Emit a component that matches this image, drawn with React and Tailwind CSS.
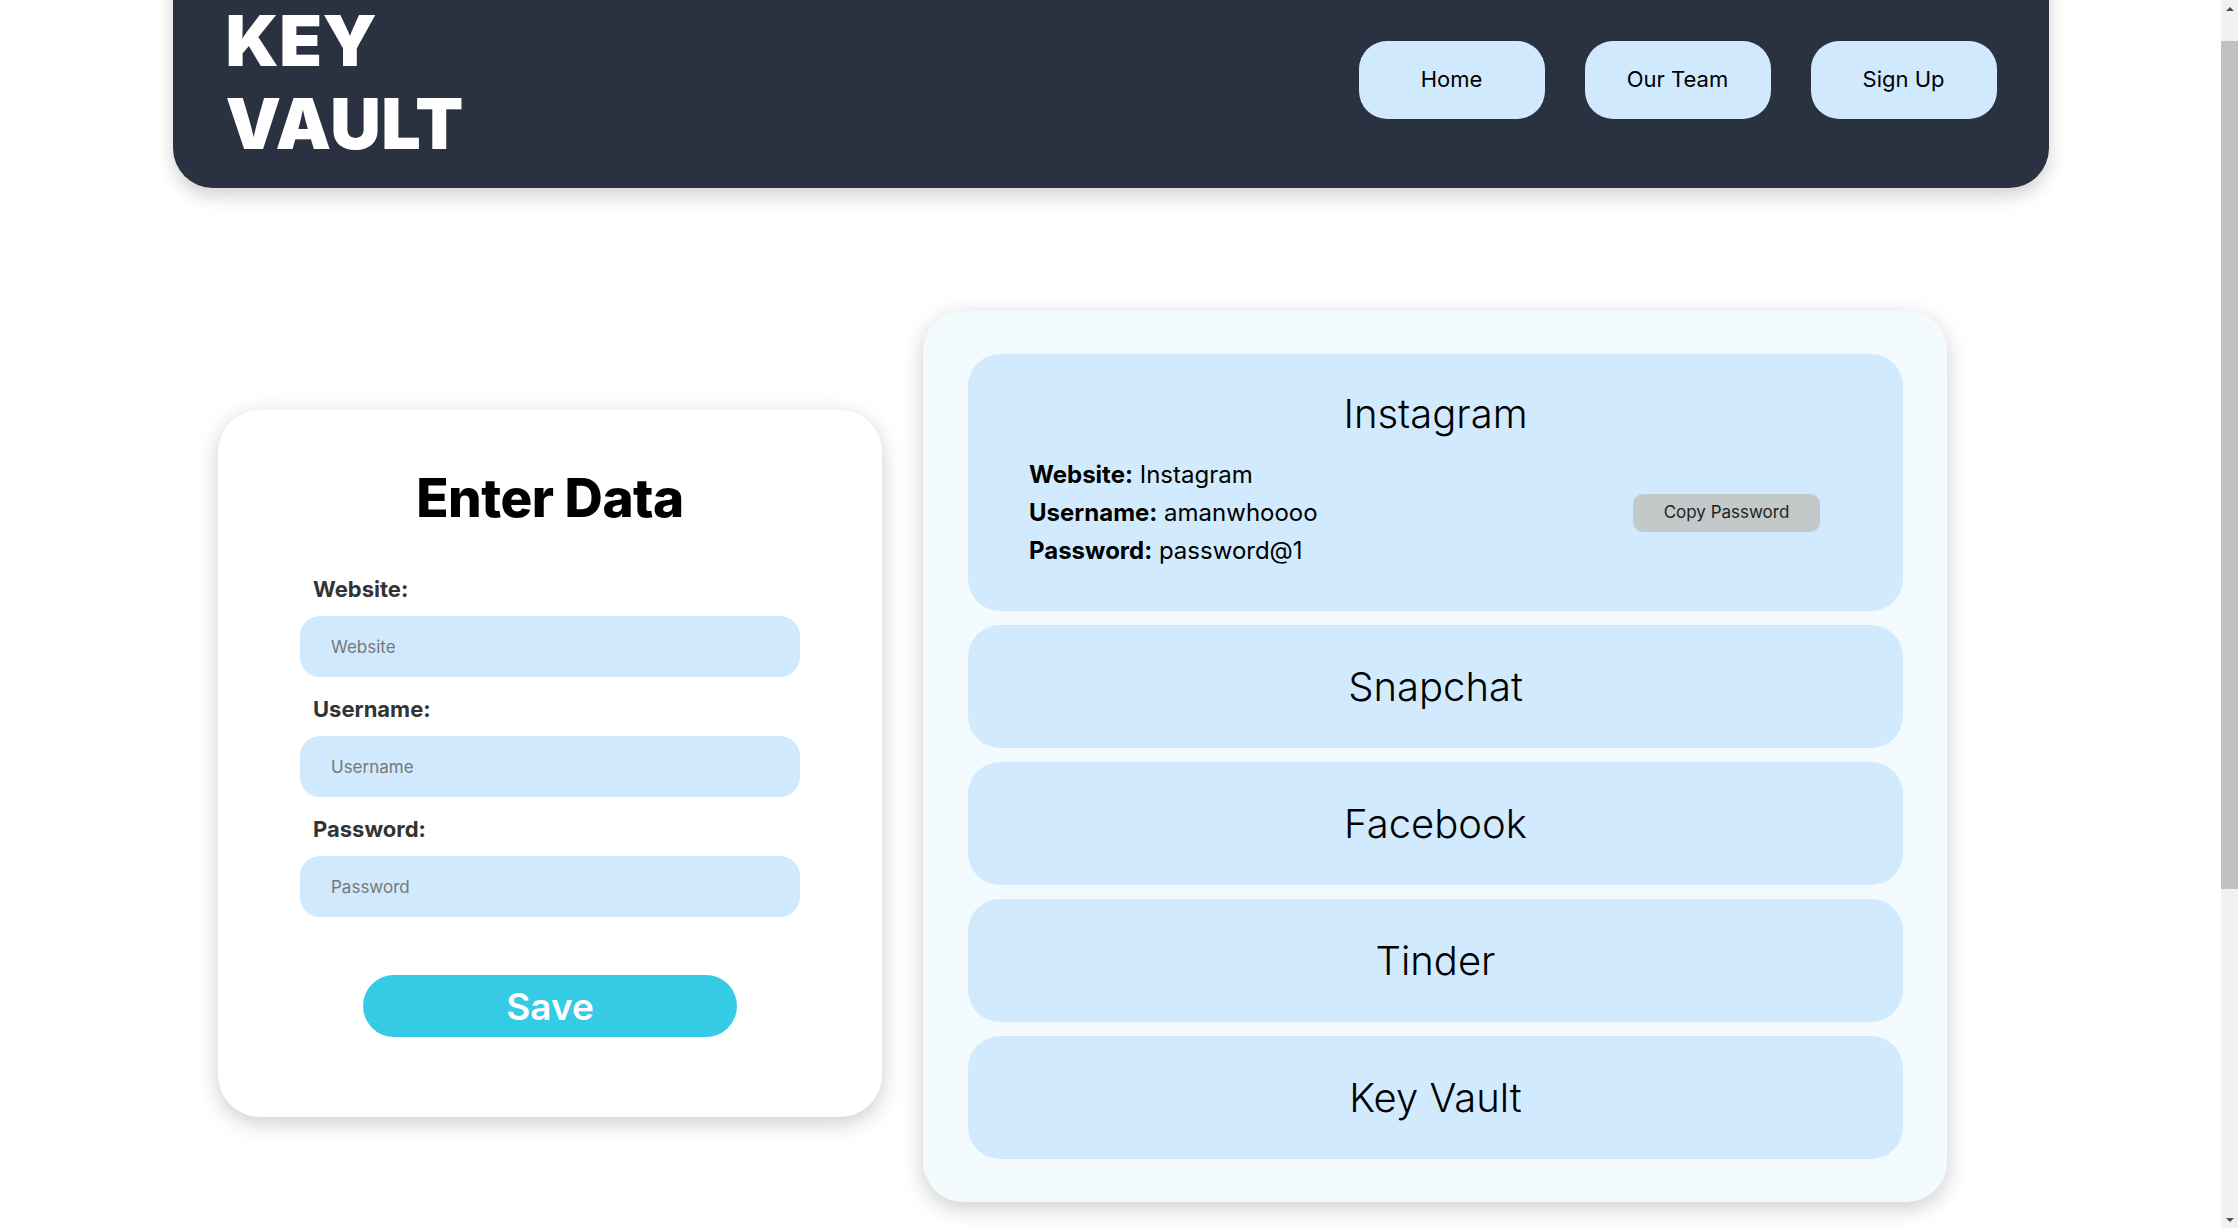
import { useState } from "react";

const sites = [
  { name: "Instagram", username: "amanwhoooo", password: "password@1" },
  { name: "Snapchat" },
  { name: "Facebook" },
  { name: "Tinder" },
  { name: "Key Vault" },
];

const Navbar = () => {
  return (
    <nav className="mx-auto -mt-[38px] flex h-[226px] w-[1876px] items-center justify-between rounded-b-[40px] bg-[#2a3140] pl-[53px] pr-[52px] pt-[9px] shadow-[0_8px_18px_rgba(0,0,0,0.18)]">
      <h1 className="pt-[4px] font-['Inter'] text-[70px] font-black uppercase leading-[83px] tracking-[0.5px] text-white">
        Key
        <br />
        Vault
      </h1>
      <div className="flex gap-[40px]">
        {["Home", "Our Team", "Sign Up"].map((item) => (
          <button
            key={item}
            className="h-[78px] w-[186px] rounded-[28px] bg-[#d1e9fd] text-[22px] text-black"
          >
            {item}
          </button>
        ))}
      </div>
    </nav>
  );
};

const Field = ({ label, placeholder }) => (
  <div className="flex flex-col">
    <label className="mb-[10px] pl-[13px] text-[22px] font-bold text-[#333]">
      {label}
    </label>
    <input
      placeholder={placeholder}
      className="h-[61px] w-[500px] rounded-[20px] bg-[#d1e9fd] px-[31px] text-[17px] outline-none placeholder:text-[#777]"
    />
  </div>
);

const EntryForm = () => (
  <div className="mt-[14px] flex w-[664px] flex-col items-center rounded-[42px] bg-white pb-[80px] pt-[49px] shadow-[0_6px_22px_rgba(0,0,0,0.2)]">
    <h2 className="mb-[35px] text-[53px] font-extrabold tracking-[-0.5px] text-black">
      Enter Data
    </h2>
    <div className="flex flex-col gap-[16px]">
      <Field label="Website:" placeholder="Website" />
      <Field label="Username:" placeholder="Username" />
      <Field label="Password:" placeholder="Password" />
    </div>
    <button className="mt-[58px] h-[62px] w-[374px] rounded-full bg-[#36cbe5] text-[37px] font-semibold text-white">
      Save
    </button>
  </div>
);

const SiteCard = ({ site, open, onClick }) => (
  <div
    onClick={onClick}
    className={`w-[935px] cursor-pointer rounded-[32px] bg-[#d1eafd] ${
      open ? "pb-[45px] pt-[30px]" : "flex h-[123px] items-center justify-center"
    }`}
  >
    <h3 className="text-center text-[40px] font-light text-black">
      {site.name}
    </h3>
    {open && (
      <div className="mt-[16px] flex items-center justify-between pl-[61px] pr-[83px]">
        <div className="flex flex-col gap-[8px] text-[24px] leading-[30px] text-black">
          <p>
            <span className="font-bold">Website:</span> {site.name}
          </p>
          <p>
            <span className="font-bold">Username:</span> {site.username}
          </p>
          <p>
            <span className="font-bold">Password:</span> {site.password}
          </p>
        </div>
        <button className="h-[38px] w-[187px] rounded-[10px] bg-[#c2c9c8] text-[17px] text-[#222]">
          Copy Password
        </button>
      </div>
    )}
  </div>
);

// the reference was captured with a classic scrollbar on the right edge
const Scrollbar = () => (
  <div className="fixed right-0 top-0 flex h-screen w-[17px] flex-col bg-[#f1f1f1]">
    <div className="flex h-[17px] items-center justify-center">
      <div className="h-0 w-0 border-x-[4px] border-b-[4px] border-x-transparent border-b-[#505050]" />
    </div>
    <div className="mt-[24px] h-[848px] bg-[#c1c1c1]" />
    <div className="mt-auto flex h-[17px] items-center justify-center">
      <div className="h-0 w-0 border-x-[4px] border-t-[4px] border-x-transparent border-t-[#505050]" />
    </div>
  </div>
);

export default function App() {
  const [selected, setSelected] = useState("Instagram");

  return (
    <div className="min-h-[1700px] bg-white pr-[17px] font-['Inter',sans-serif]">
      <Navbar />
      <main className="mt-[123px] flex items-center gap-[41px] pl-[218px]">
        <EntryForm />
        <div className="flex w-[1024px] flex-col gap-[14px] rounded-[40px] bg-[#f4fbfe] px-[45px] py-[43px] shadow-[0_6px_22px_rgba(0,0,0,0.2)]">
          {sites.map((site) => (
            <SiteCard
              key={site.name}
              site={site}
              open={selected === site.name}
              onClick={() => setSelected(site.name)}
            />
          ))}
        </div>
      </main>
      <Scrollbar />
    </div>
  );
}
